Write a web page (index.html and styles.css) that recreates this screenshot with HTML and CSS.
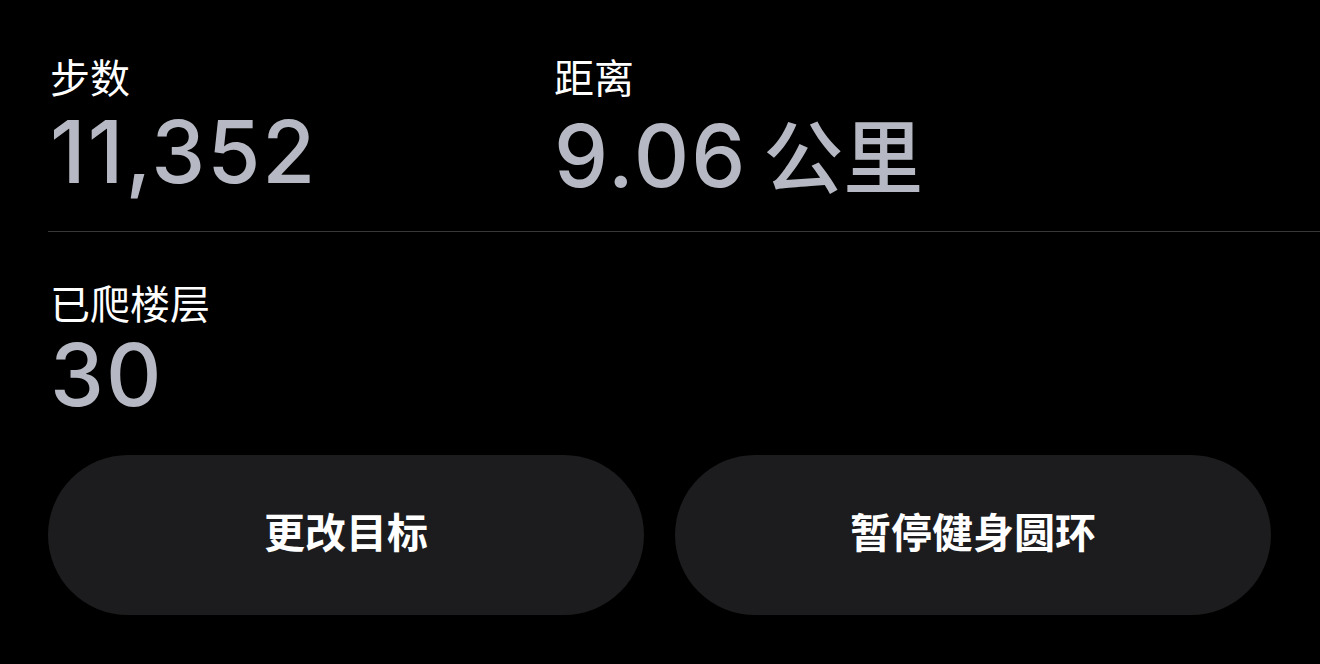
FILE: index.html
```html
<!DOCTYPE html>
<html lang="zh-CN">
<head>
<meta charset="utf-8">
<link rel="stylesheet" href="styles.css">
</head>
<body>
<div class="page">
  <section class="stats-row">
    <div class="stat">
      <div class="label">步数</div>
      <div class="value">11,352</div>
    </div>
    <div class="stat">
      <div class="label">距离</div>
      <div class="value">9.06<span class="unit">公里</span></div>
    </div>
  </section>
  <div class="divider"></div>
  <section class="stats-row second">
    <div class="stat">
      <div class="label">已爬楼层</div>
      <div class="value">30</div>
    </div>
  </section>
  <section class="actions">
    <button class="pill">更改目标</button>
    <button class="pill">暂停健身圆环</button>
  </section>
</div>
</body>
</html>
```

FILE: styles.css
```css
html, body {
  margin: 0;
  padding: 0;
  background: #000;
}
body {
  width: 1320px;
  height: 664px;
  overflow: hidden;
  font-family: Inter, "Noto Sans CJK SC", sans-serif;
}
.page {
  padding-left: 48px;
  padding-top: 52px;
}
.stats-row {
  display: grid;
  grid-template-columns: 504px 1fr;
  padding-left: 2px;
}
.label {
  color: #fff;
  font-family: "Noto Sans CJK SC", sans-serif;
  font-size: 40px;
  line-height: 48px;
  font-weight: 400;
}
.value {
  color: #b6b9c3;
  font-size: 86px;
  line-height: 104px;
  font-weight: 500;
  letter-spacing: 2px;
  display: flex;
  align-items: baseline;
}
.unit {
  font-family: "Noto Sans CJK SC", sans-serif;
  font-size: 80px;
  font-weight: 500;
  margin-left: 16px;
  letter-spacing: 0;
}
.divider {
  height: 1px;
  background: #38383a;
  margin-top: 23px;
  margin-bottom: 46px;
}
.second {
  height: 177px;
}
.second .label {
  line-height: 42px;
  padding-top: 3px;
}
.actions {
  display: grid;
  grid-template-columns: 596px 596px;
  column-gap: 31px;
}
.pill {
  height: 160px;
  border: 0;
  border-radius: 80px;
  background: #1c1c1e;
  color: #fff;
  font-family: "Noto Sans CJK SC", sans-serif;
  font-size: 41px;
  font-weight: 700;
  padding: 0 0 10px 0;
}
```
